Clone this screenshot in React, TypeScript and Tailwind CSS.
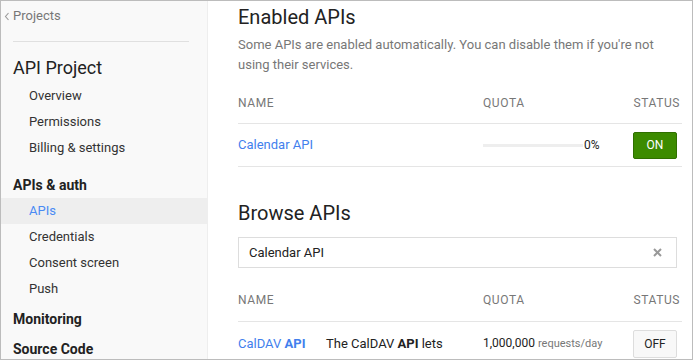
import React from "react";

const font = { fontFamily: "Roboto, 'Noto Sans', Arial, sans-serif" };

function SideItem({ label, active }: { label: string; active?: boolean }) {
  return (
    <div
      className={`shrink-0 h-[26px] flex items-center pl-[28px] text-[13px] ${
        active ? "bg-[#eeeeee] text-[#4a8af4]" : "text-[#333333]"
      }`}
    >
      {label}
    </div>
  );
}

function SideHeader({ label, h }: { label: string; h: string }) {
  return (
    <div className={`shrink-0 ${h} flex items-center pl-[12px] text-[14px] font-bold text-[#222222]`}>{label}</div>
  );
}

function TableHead({ mt, h }: { mt: string; h: string }) {
  return (
    <div className={`shrink-0 ${mt} ${h} pb-[3px] border-b border-[#e5e5e5] flex items-center text-[12px] tracking-[0.6px] text-[#777777]`}>
      <div className="w-[245px]">NAME</div>
      <div className="w-[150px]">QUOTA</div>
      <div className="flex-1 text-right pr-[2px]">STATUS</div>
    </div>
  );
}

export default function App() {
  return (
    <div
      style={font}
      className="w-[693px] h-[360px] border border-[#bcbcbc] flex overflow-hidden bg-white"
    >
      {/* Sidebar */}
      <div className="w-[207px] shrink-0 bg-[#f9f9f9] border-r border-[#eeeeee] flex flex-col">
        <div className="shrink-0 mt-[5px] pl-[3px] h-[20px] flex items-center text-[13px] text-[#777777] gap-[3px]">
          <svg width="6" height="9" viewBox="0 0 6 9" className="mt-[1px]">
            <path d="M4.5 1 L1.5 4.5 L4.5 8" stroke="#999" strokeWidth="1.1" fill="none" />
          </svg>
          <span>Projects</span>
        </div>
        <div className="shrink-0 ml-[12px] mt-[15px] w-[176px] h-px bg-[#e0e0e0]" />
        <div className="shrink-0 mt-[12px] pl-[12px] h-[26px] flex items-center text-[18px] text-[#222222]">
          API Project
        </div>
        <div className="shrink-0 mt-[3px] flex flex-col">
          <SideItem label="Overview" />
          <SideItem label="Permissions" />
          <SideItem label="Billing & settings" />
        </div>
        <div className="shrink-0 mt-[11px] flex flex-col">
          <SideHeader label="APIs & auth" h="h-[26px]" />
          <SideItem label="APIs" active />
          <SideItem label="Credentials" />
          <SideItem label="Consent screen" />
          <SideItem label="Push" />
        </div>
        <div className="shrink-0 mt-[2px] flex flex-col">
          <SideHeader label="Monitoring" h="h-[30px]" />
          <SideHeader label="Source Code" h="h-[30px]" />
        </div>
      </div>

      {/* Main */}
      <div className="flex-1 pl-[30px] pr-[10px] flex flex-col">
        <div className="shrink-0 mt-[2px] h-[28px] flex items-center text-[20px] text-[#222222]">Enabled APIs</div>
        <div className="shrink-0 mt-[4px] text-[13px] leading-[20px] text-[#777777] pr-[10px]">
          Some APIs are enabled automatically. You can disable them if you're not using their services.
        </div>
        <TableHead mt="mt-[10px]" h="h-[39px]" />
        <div className="shrink-0 h-[43px] border-b border-[#e5e5e5] flex items-center text-[13px]">
          <div className="w-[245px] text-[#427fed]">Calendar API</div>
          <div className="w-[150px] flex items-center">
            <div className="w-[100px] h-[3px] bg-[#eeeeee]" />
            <span className="text-[12px] text-[#222222] ml-[1px]">0%</span>
          </div>
          <div className="flex-1 flex justify-end pr-[5px]">
            <div className="w-[44px] h-[27px] flex items-center justify-center bg-[#3c8b00] border border-[#2f6f00] rounded-[2px] text-white text-[12px]">
              ON
            </div>
          </div>
        </div>

        <div className="shrink-0 mt-[32px] h-[28px] flex items-center text-[20px] text-[#222222]">Browse APIs</div>
        <div className="shrink-0 mt-[10px] mr-[5px] h-[31px] border border-[#dddddd] flex items-center pl-[10px] pr-[14px] text-[13px] text-[#222222]">
          <span className="flex-1">Calendar API</span>
          <svg width="9" height="9" viewBox="0 0 9 9">
            <path d="M1 1 L8 8 M8 1 L1 8" stroke="#999" strokeWidth="2" />
          </svg>
        </div>
        <TableHead mt="mt-[14px]" h="h-[40px]" />
        <div className="shrink-0 h-[43px] flex items-center text-[13px]">
          <div className="w-[88px] text-[#427fed]">
            CalDAV <span className="font-bold">API</span>
          </div>
          <div className="w-[157px] text-[#222222]">
            The CalDAV <span className="font-bold">API</span> lets
          </div>
          <div className="w-[150px] text-[12px] text-[#222222] whitespace-nowrap">
            1,000,000 <span className="text-[11px] text-[#777777]">requests/day</span>
          </div>
          <div className="flex-1 flex justify-end pr-[5px]">
            <div className="w-[44px] h-[28px] flex items-center justify-center bg-[#f8f8f8] border border-[#dddddd] rounded-[2px] text-[#222222] text-[12px]">
              OFF
            </div>
          </div>
        </div>
      </div>
    </div>
  );
}
